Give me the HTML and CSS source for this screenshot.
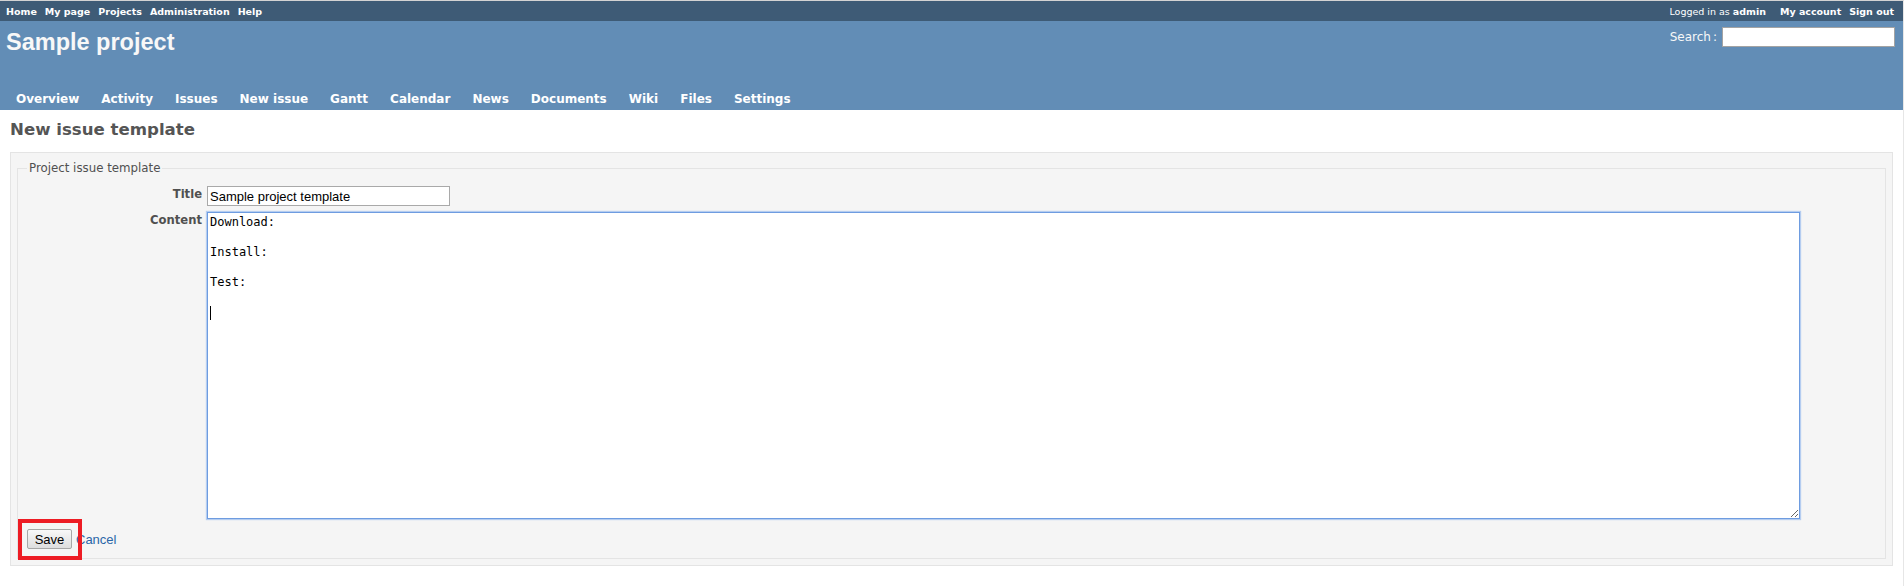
FILE: index.html
```html
<!DOCTYPE html>
<html lang="en">
<head>
<meta charset="utf-8">
<title>New issue template - Sample project</title>
<link rel="stylesheet" href="styles.css">
</head>
<body>
<div class="page">
  <div class="top-menu">
    <ul class="top-links">
      <li><a href="#">Home</a></li>
      <li><a href="#">My page</a></li>
      <li><a href="#">Projects</a></li>
      <li><a href="#">Administration</a></li>
      <li><a href="#">Help</a></li>
    </ul>
    <div class="account">
      <span class="loggedas">Logged in as <b>admin</b></span>
      <ul class="top-links">
        <li><a href="#">My account</a></li>
        <li><a href="#">Sign out</a></li>
      </ul>
    </div>
  </div>

  <div class="header">
    <div class="header-top">
      <h1>Sample project</h1>
      <form class="quick-search">
        <label for="q">Search</label><span class="colon">:</span>
        <input id="q" type="text" class="search-input">
      </form>
    </div>
    <ul class="main-menu">
      <li><a href="#">Overview</a></li>
      <li><a href="#">Activity</a></li>
      <li><a href="#">Issues</a></li>
      <li><a href="#">New issue</a></li>
      <li><a href="#">Gantt</a></li>
      <li><a href="#">Calendar</a></li>
      <li><a href="#">News</a></li>
      <li><a href="#">Documents</a></li>
      <li><a href="#">Wiki</a></li>
      <li><a href="#">Files</a></li>
      <li><a href="#">Settings</a></li>
    </ul>
  </div>

  <div class="content">
    <h2>New issue template</h2>
    <div class="box">
      <fieldset class="tabular">
        <legend>Project issue template</legend>
        <div class="row">
          <label for="title" class="field-label">Title</label>
          <input id="title" type="text" class="title-input" value="Sample project template">
        </div>
        <div class="row">
          <label for="body" class="field-label">Content</label>
          <div class="editor">
            <textarea id="body" class="content-area">Download:

Install:

Test:

</textarea>
            <span class="caret"></span>
          </div>
        </div>
        <div class="buttons">
          <span class="save-wrap">
            <button type="button" class="save-btn">Save</button>
            <span class="highlight"></span>
          </span>
          <a href="#" class="cancel">Cancel</a>
        </div>
      </fieldset>
    </div>
  </div>
</div>
</body>
</html>
```

FILE: styles.css
```css
html, body {
  margin: 0;
  padding: 0;
  background: #ffffff;
}

body {
  font-family: "DejaVu Sans", Verdana, sans-serif;
  font-size: 12px;
  color: #505050;
}

.page {
  border-top: 1px solid #d3d3d3;
  border-right: 1px solid #e6e6e6;
  min-height: 585px;
}

ul {
  list-style: none;
  margin: 0;
  padding: 0;
}

a {
  text-decoration: none;
}

/* ---------- top menu ---------- */
.top-menu {
  display: flex;
  justify-content: space-between;
  align-items: flex-start;
  background: #3e5b76;
  color: #ffffff;
  height: 20px;
  box-sizing: border-box;
  padding: 1px 9px 0 6px;
  font-size: 9.5px;
  line-height: 19px;
}

.top-links {
  display: flex;
  gap: 8px;
}

.top-links a {
  color: #ffffff;
  font-weight: bold;
}

.account {
  display: flex;
  gap: 14px;
}

.loggedas b {
  font-weight: bold;
}

/* ---------- header ---------- */
.header {
  background: #628db6;
  color: #f8f8f8;
  height: 89px;
  display: flex;
  flex-direction: column;
}

.header-top {
  display: flex;
  justify-content: space-between;
  align-items: flex-start;
}

.header h1 {
  margin: 8px 0 0 6px;
  font-family: "Liberation Sans", Arial, sans-serif;
  font-size: 23.5px;
  font-weight: bold;
  line-height: 27px;
  color: #f8f8f8;
}

.quick-search {
  display: flex;
  align-items: center;
  margin: 6px 8px 0 0;
  font-size: 12px;
  color: #f8f8f8;
}

.quick-search .colon {
  margin-left: 2px;
}

.search-input {
  width: 173px;
  height: 20px;
  box-sizing: border-box;
  margin: 0 0 0 5px;
  border: 1px solid #a3a3a3;
  background: #ffffff;
  padding: 1px 2px;
}

.main-menu {
  display: flex;
  margin-top: auto;
  padding-left: 6px;
}

.main-menu li {
  margin-right: 2px;
}

.main-menu a {
  display: block;
  color: #ffffff;
  font-weight: bold;
  font-size: 12px;
  line-height: 14px;
  padding: 0 10px 4px 10px;
}

/* ---------- content ---------- */
.content {
  padding: 10px 10px 0 10px;
}

.content h2 {
  margin: 0 0 12px 0;
  font-size: 16.6px;
  line-height: 20px;
  font-weight: bold;
  color: #555555;
}

.box {
  background: #f5f5f5;
  border: 1px solid #e4e4e4;
  padding: 6px;
}

.tabular {
  margin: 0;
  border: 1px solid #e4e4e4;
  padding: 6px 9px 9px 9px;
}

.tabular legend {
  padding: 0 2px;
  font-size: 11.8px;
  line-height: 18px;
  color: #505050;
}

.row {
  display: flex;
  align-items: flex-start;
  gap: 5px;
  padding: 3px 0;
}

.field-label {
  width: 175px;
  text-align: right;
  font-weight: bold;
  font-size: 11.6px;
  line-height: 18px;
  margin-top: -1px;
  color: #505050;
}

.title-input {
  width: 243px;
  height: 20px;
  box-sizing: border-box;
  margin: 0;
  border: 1px solid #a9a9a9;
  padding: 1px 2px;
  font-family: "Liberation Sans", Arial, sans-serif;
  font-size: 13px;
  color: #000000;
  background: #ffffff;
}

.editor {
  position: relative;
}

.content-area {
  display: block;
  width: 1593px;
  height: 307px;
  box-sizing: border-box;
  margin: 0;
  padding: 2px;
  border: 1px solid #6e9ce0;
  box-shadow: 0 0 1px 1px #b5cdf0;
  outline: none;
  resize: both;
  font-family: "DejaVu Sans Mono", monospace;
  font-size: 12px;
  line-height: 15px;
  color: #000000;
  background: #ffffff;
}

.caret {
  position: absolute;
  left: 3px;
  top: 94px;
  width: 1px;
  height: 14px;
  background: #000000;
}

.buttons {
  display: flex;
  align-items: center;
  margin-top: 7px;
}

.save-wrap {
  position: relative;
  display: inline-block;
}

.save-btn {
  display: block;
  width: 45px;
  height: 20px;
  box-sizing: border-box;
  margin: 0;
  padding: 0;
  border: 1px solid #a7a7a7;
  border-radius: 2px;
  background: linear-gradient(#f8f8f8, #dddddd);
  font-family: "Liberation Sans", Arial, sans-serif;
  font-size: 13px;
  color: #000000;
}

.highlight {
  position: absolute;
  left: -9px;
  top: -10px;
  right: -10px;
  bottom: -11px;
  border: 4px solid #ed1c24;
  pointer-events: none;
}

.cancel {
  margin-left: 4px;
  font-family: "Liberation Sans", Arial, sans-serif;
  font-size: 13px;
  color: #2a66a8;
}
```
